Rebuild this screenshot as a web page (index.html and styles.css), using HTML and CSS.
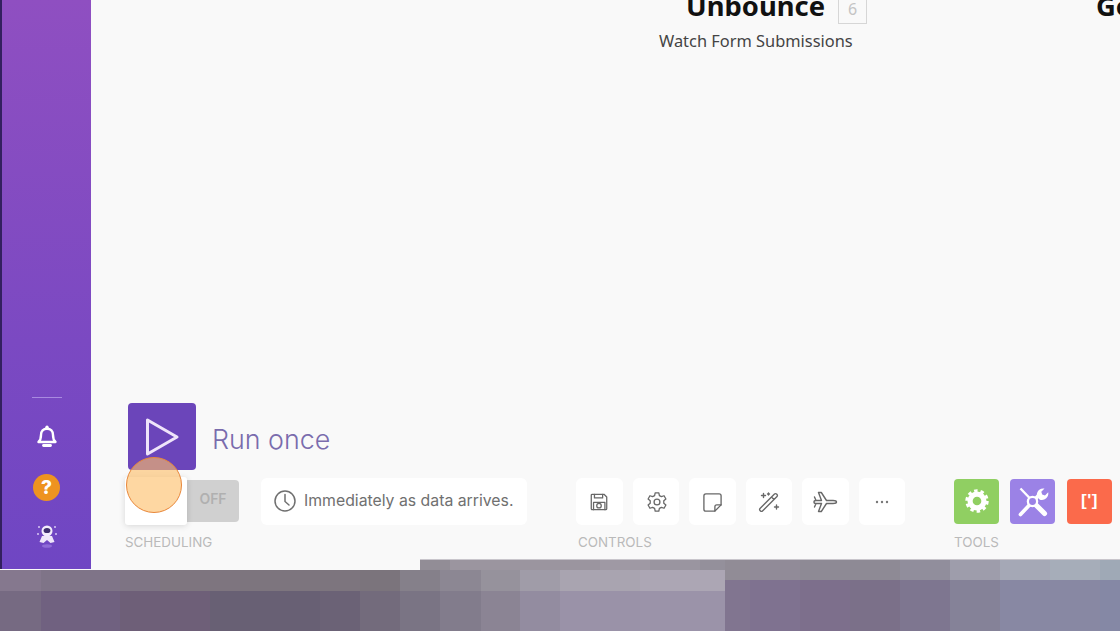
FILE: index.html
```html
<!DOCTYPE html>
<html lang="en">
<head>
    <meta charset="UTF-8">
    <title>Scenario editor</title>
    <link rel="stylesheet" href="styles.css">
</head>
<body>
    <div class="app">
        <div class="main">
            <aside class="sidebar">
                <div class="side-line"></div>
                <svg class="side-icon" width="24" height="26" viewBox="0 0 24 26">
                    <path d="M3.500 19c2-1.800 2.500-3.500 2.500-7 0-3.800 2.300-6.300 6-6.300s6 2.500 6 6.300c0 3.500.5 5.200 2.500 7z" fill="none" stroke="#fff" stroke-width="2.400" stroke-linejoin="round"/>
                    <circle cx="12" cy="4.300" r="1.700" fill="#fff"/>
                    <path d="M8.500 22.500h7" stroke="#fff" stroke-width="2.800" stroke-linecap="round"/>
                </svg>
                <div class="help-dot">?</div>
                <svg class="side-icon astro" width="26" height="30" viewBox="0 0 26 30">
                    <circle cx="13" cy="10" r="5.500" fill="#f3ecfb"/>
                    <ellipse cx="13" cy="9.500" rx="3.400" ry="2.600" fill="#3f2f6e"/>
                    <path d="M8 15h10l2.500 6-4 1-3.500-3-3.500 3-4-1z" fill="#efe6fa"/>
                    <ellipse cx="13" cy="25" rx="5" ry="1.800" fill="#8f6bd8"/>
                    <circle cx="5" cy="6" r="1" fill="#d9c8f3"/>
                    <circle cx="21" cy="6" r="1" fill="#d9c8f3"/>
                    <circle cx="4" cy="13" r="1" fill="#d9c8f3"/>
                    <circle cx="22" cy="13" r="1" fill="#d9c8f3"/>
                </svg>
            </aside>

            <main class="canvas">
                <div class="node">
                    <div class="node-head">
                        <span class="node-name">Unbounce</span>
                        <span class="node-id">6</span>
                    </div>
                    <div class="node-sub">Watch Form Submissions</div>
                </div>
                <div class="node-next">Go</div>

                <div class="run-row">
                    <button class="run-btn">
                        <svg width="36" height="40" viewBox="0 0 36 40">
                            <path d="M3.500 3v34L33 20z" fill="none" stroke="#efe4fa" stroke-width="3" stroke-linejoin="round"/>
                        </svg>
                    </button>
                    <span class="run-label">Run once</span>
                </div>

                <div class="toolbar">
                    <section class="tool-group group-schedule">
                        <div class="group-row">
                            <div class="toggle">
                                <div class="toggle-knob"></div>
                                <div class="toggle-off">OFF</div>
                                <div class="click-marker"></div>
                            </div>
                            <div class="schedule-text">
                                <svg width="24" height="24" viewBox="0 0 24 24">
                                    <circle cx="12" cy="12" r="10" fill="none" stroke="#707070" stroke-width="1.500"/>
                                    <path d="M12 5.500V12.500l4 3.500" fill="none" stroke="#707070" stroke-width="1.500" stroke-linecap="round"/>
                                </svg>
                                <span>Immediately as data arrives.</span>
                            </div>
                        </div>
                        <div class="group-label">Scheduling</div>
                    </section>

                    <section class="tool-group group-controls">
                        <div class="group-row icon-row">
                            <button class="icon-btn">
                                <svg width="20" height="20" viewBox="0 0 22 22" class="line-icon">
                                    <path d="M2.500 3.500a1 1 0 0 1 1-1h13l3 3v13a1 1 0 0 1-1 1h-15a1 1 0 0 1-1-1z"/>
                                    <path d="M6 2.500v4h9v-4M5 19.500v-8h12.500v8"/>
                                    <circle cx="11" cy="15" r="2.500"/>
                                </svg>
                            </button>
                            <button class="icon-btn gear-btn">
                                <svg width="22" height="22" viewBox="0 0 24 24" class="line-icon">
                                    <circle cx="12" cy="12" r="3.200"/>
                                    <path d="M10 2h4l.6 3 2.200 1.200 2.900-1 2 3.500-2.300 2v2.600l2.300 2-2 3.500-2.900-1-2.200 1.200-.6 3h-4l-.6-3-2.200-1.200-2.900 1-2-3.500 2.300-2v-2.600l-2.300-2 2-3.500 2.900 1L9.400 5z"/>
                                </svg>
                            </button>
                            <button class="icon-btn">
                                <svg width="21" height="21" viewBox="0 0 22 22" class="line-icon">
                                    <path d="M13.500 20H4a2 2 0 0 1-2-2V4a2 2 0 0 1 2-2h14a2 2 0 0 1 2 2v9.500z"/>
                                    <path d="M13.500 20v-4.500a2 2 0 0 1 2-2H20"/>
                                </svg>
                            </button>
                            <button class="icon-btn">
                                <svg width="24" height="24" viewBox="0 0 24 24" class="line-icon">
                                    <path d="M3 18.500 17.500 4a1.400 1.400 0 0 1 2 0l.5.500a1.400 1.400 0 0 1 0 2L5.500 21a1.400 1.400 0 0 1-2 0l-.5-.5a1.400 1.400 0 0 1 0-2zM14.500 7l2.500 2.500"/>
                                    <path d="M6.500 3.500v4M4.500 5.500h4M19.500 15v4M17.500 17h4M11.500 3v2M10.500 4h2"/>
                                </svg>
                            </button>
                            <button class="icon-btn">
                                <svg width="26" height="24" viewBox="0 0 26 24" class="line-icon">
                                    <path d="M2 12c0-1 1-1.500 2-1.500h5.500L6.500 2.500h2.800l5.200 8H21c2 0 3.500.8 3.500 1.500s-1.500 1.500-3.500 1.500h-6.500l-5.200 8H6.500l3-8H4c-1 0-2-.5-2-1.500zM2.500 7l1.500 3.500M2.500 17 4 13.500"/>
                                </svg>
                            </button>
                            <button class="icon-btn">
                                <svg width="16" height="4" viewBox="0 0 16 4">
                                    <circle cx="3" cy="2" r="1.200" fill="#777"/>
                                    <circle cx="8" cy="2" r="1.200" fill="#777"/>
                                    <circle cx="13" cy="2" r="1.200" fill="#777"/>
                                </svg>
                            </button>
                        </div>
                        <div class="group-label">Controls</div>
                    </section>

                    <section class="tool-group group-tools">
                        <div class="group-row icon-row tools-row">
                            <button class="tool-btn tool-green">
                                <svg width="26" height="26" viewBox="0 0 30 30">
                                    <circle cx="15" cy="15" r="8" fill="none" stroke="#fff" stroke-width="6"/>
                                    <circle cx="15" cy="15" r="11.500" fill="none" stroke="#fff" stroke-width="4" stroke-dasharray="3.900 3.326"/>
                                </svg>
                            </button>
                            <button class="tool-btn tool-purple">
                                <svg width="37" height="37" viewBox="0 0 40 40">
                                    <path d="M7 6l26 27" stroke="#fff" stroke-width="2.500"/>
                                    <path d="M24 24l9 9" stroke="#fff" stroke-width="5.500" stroke-linecap="round"/>
                                    <path d="M7 34 26 14" stroke="#fff" stroke-width="4" stroke-linecap="round"/>
                                    <path d="M25 15a7 7 0 0 1 8-9l-3.500 3.500 1 3 3 1L37 10a7 7 0 0 1-9 8z" fill="#fff"/>
                                    <circle cx="20" cy="20" r="5" fill="#9b82e6" stroke="#fff" stroke-width="2.500"/>
                                </svg>
                            </button>
                            <button class="tool-btn tool-red">
                                <span class="bracket-text">[']</span>
                            </button>
                        </div>
                        <div class="group-label">Tools</div>
                    </section>
                </div>
            </main>
        </div>

        <!-- blurred out part of the screenshot -->
        <div class="mosaic">
            <div class="strip strip-a"></div>
            <div class="strip strip-b"></div>
            <div class="strip strip-c"></div>
            <div class="strip strip-d"></div>
        </div>
    </div>
</body>
</html>
```

FILE: styles.css
```css
body {
    margin: 0;
    background-color: #f9f9f9;
    font-family: Inter, "Liberation Sans", sans-serif;
}

.app {
    width: 1120px;
    height: 631px;
    overflow: hidden;
    display: flex;
    flex-direction: column;
}

.main {
    display: flex;
    height: 569px;
    flex-shrink: 0;
}

/* sidebar */
.sidebar {
    width: 89px;
    border-left: 2px solid #33205f;
    background: linear-gradient(180deg, #8f4fc1 0%, #7b49c2 60%, #6f46c3 100%);
    display: flex;
    flex-direction: column;
    align-items: center;
    justify-content: flex-end;
    padding-bottom: 18px;
    box-sizing: content-box;
    height: 551px;
}

.side-line {
    width: 30px;
    height: 1px;
    background-color: #a98ae0;
    margin-bottom: 25px;
}

.side-icon {
    display: block;
}

.help-dot {
    width: 27px;
    height: 27px;
    border-radius: 50%;
    background-color: #ee9320;
    color: #fff;
    font-size: 19px;
    font-weight: 800;
    line-height: 27px;
    text-align: center;
    margin-top: 25px;
    margin-bottom: 20px;
}

/* canvas */
.canvas {
    flex: 1;
    position: relative;
    display: flex;
    flex-direction: column;
    justify-content: flex-end;
    padding-left: 34px;
    padding-bottom: 19px;
}

.node {
    position: absolute;
    left: 568px;
    top: -12px;
    width: 210px;
    font-family: "Noto Sans", "Open Sans", sans-serif;
}

.node-head {
    display: flex;
    align-items: flex-start;
    gap: 13px;
    padding-left: 27px;
}

.node-name {
    font-size: 27.400px;
    line-height: 36px;
    font-weight: 700;
    color: #111;
}

.node-id {
    width: 27px;
    height: 27px;
    margin-top: 7px;
    border: 1px solid #d6d6d6;
    color: #c4c4c4;
    font-size: 16px;
    line-height: 26px;
    text-align: center;
}

.node-sub {
    font-size: 16.400px;
    line-height: 22px;
    color: #444;
    white-space: nowrap;
    margin-top: 6px;
}

.node-next {
    position: absolute;
    left: 1005px;
    top: -12px;
    font-family: "Noto Sans", "Open Sans", sans-serif;
    font-size: 27.400px;
    line-height: 36px;
    font-weight: 700;
    color: #111;
}

.run-row {
    display: flex;
    align-items: center;
    gap: 16px;
    margin-left: 3px;
    margin-bottom: 7px;
}

.run-btn {
    width: 68px;
    height: 67px;
    border: none;
    padding: 0;
    background-color: #6b45ba;
    border-radius: 4px;
    display: flex;
    align-items: center;
    justify-content: center;
}

.run-label {
    font-size: 26.800px;
    font-weight: 300;
    color: #7a6cad;
    margin-top: 4px;
}

.toolbar {
    display: flex;
}

.tool-group {
    display: flex;
    flex-direction: column;
}

.group-schedule {
    width: 451px;
}

.group-controls {
    width: 378px;
}

.group-row {
    display: flex;
    align-items: center;
    height: 48px;
}

.group-label {
    font-size: 13.400px;
    line-height: 16px;
    margin-top: 9px;
    color: #bababa;
    text-transform: uppercase;
}

.group-controls .group-label {
    margin-left: 2px;
}

/* scheduling */
.toggle {
    position: relative;
    display: flex;
    align-items: center;
    width: 114px;
}

.toggle-knob {
    width: 62px;
    height: 48px;
    background-color: #fff;
    border-radius: 3px;
    box-shadow: 0 1px 6px rgba(0, 0, 0, 0.14);
    position: relative;
    z-index: 1;
}

.toggle-off {
    width: 52px;
    height: 42px;
    background-color: #d0d0d0;
    border-radius: 0 4px 4px 0;
    color: #b0b0b0;
    font-size: 14px;
    font-weight: 600;
    line-height: 38px;
    text-align: center;
}

.click-marker {
    position: absolute;
    left: 1px;
    top: -20px;
    width: 54px;
    height: 54px;
    border-radius: 50%;
    border: 1px solid #e8873a;
    background-color: rgba(253, 190, 105, 0.62);
    z-index: 2;
}

.schedule-text {
    margin-left: 22px;
    width: 266px;
    height: 47px;
    box-sizing: border-box;
    padding-left: 12px;
    padding-bottom: 1px;
    background-color: #fff;
    border-radius: 6px;
    display: flex;
    align-items: center;
    gap: 7px;
    color: #707070;
    font-size: 15.800px;
    white-space: nowrap;
}

/* controls */
.icon-row {
    gap: 10px;
}

.icon-btn {
    width: 46.500px;
    height: 47px;
    padding: 2px 0 0;
    border: none;
    background-color: #fff;
    border-radius: 6px;
    display: flex;
    align-items: center;
    justify-content: center;
}

.gear-btn {
    padding-left: 2px;
}

.line-icon {
    fill: none;
    stroke: #686868;
    stroke-width: 1.400;
    stroke-linejoin: round;
    stroke-linecap: round;
}

/* tools */
.tools-row {
    gap: 11px;
}

.tool-btn {
    width: 45px;
    height: 45px;
    padding: 0;
    border: none;
    border-radius: 4px;
    display: flex;
    align-items: center;
    justify-content: center;
}

.tool-green {
    background-color: #90cf62;
}

.tool-purple {
    background-color: #9b82e6;
}

.tool-red {
    background-color: #fb6a4b;
    margin-left: 1px;
}

.bracket-text {
    color: #fff;
    font-size: 17px;
    font-weight: 700;
    letter-spacing: 0.5px;
    font-family: "Liberation Sans", sans-serif;
}

/* mosaic */
.mosaic {
    display: grid;
    grid-template-columns: 420px 305px 395px;
    grid-template-rows: 11px 10px 11px 40px;
    margin-top: -10px;
    height: 72px;
    flex-shrink: 0;
}

.strip-a {
    grid-column: 2 / 4;
    grid-row: 1 / 3;
    border-top: 1px solid #c9c6cc;
    background: linear-gradient(90deg,
        #928d96 0 30px, #9b959f 30px 180px, #9f99a4 180px 230px, #9a95a0 230px 280px,
        #94909b 280px 305px, #918c96 305px 330px, #918b98 330px 380px, #8e8a95 380px 480px,
        #918e9c 480px 530px, #9e9dab 530px 580px, #a5a8b6 580px 630px, #a6adb9 630px 680px,
        #9fa9b6 680px);
}

.strip-b {
    grid-column: 1 / 3;
    grid-row: 2 / 4;
    z-index: 1;
    background: linear-gradient(90deg,
        #85788e 0 41px, #7f7488 41px 120px, #7e7484 120px 160px, #7e757f 160px 240px,
        #7d757e 240px 360px, #7b747c 360px 400px, #85808a 400px 440px, #8c8793 440px 481px,
        #96929c 481px 520px, #a09ca8 520px 560px, #a9a4b0 560px 640px, #aca6b4 640px);
}

.strip-c {
    grid-column: 1 / 3;
    grid-row: 4;
    background: linear-gradient(90deg,
        #766a82 0 41px, #706180 41px 120px, #6e5f78 120px 210px, #686074 210px 320px,
        #6b6276 320px 360px, #736b7c 360px 400px, #7a7484 400px 440px, #827c8c 440px 481px,
        #8b8494 481px 520px, #938ca0 520px 560px, #9a92a8 560px 640px, #9b93a9 640px);
}

.strip-d {
    grid-column: 3;
    grid-row: 3 / 5;
    background: linear-gradient(90deg,
        #817590 0 25px, #7f7290 25px 75px, #7d6f8c 75px 125px, #7b7089 125px 175px,
        #7e7690 175px 225px, #858298 225px 275px, #8888a3 275px 375px, #8588a5 375px);
}
```
